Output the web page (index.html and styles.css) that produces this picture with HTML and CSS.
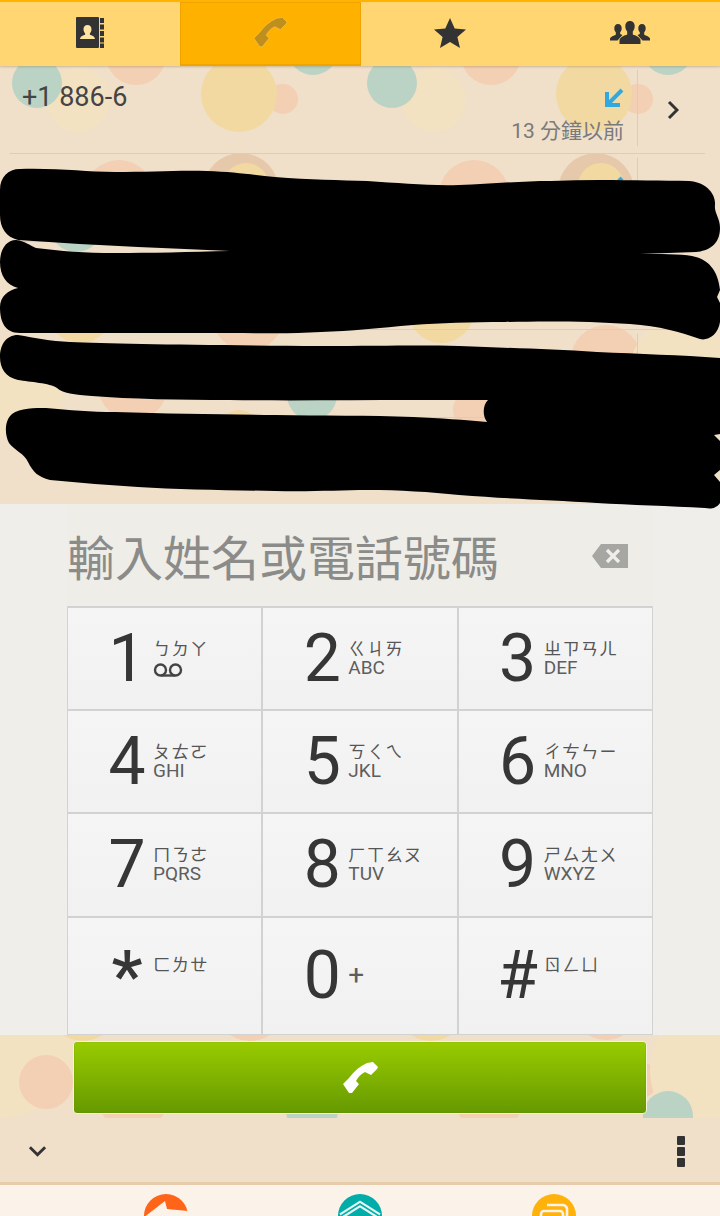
FILE: index.html
```html
<!DOCTYPE html>
<html lang="zh-Hant">
<head>
    <meta charset="UTF-8">
    <meta name="viewport" content="width=device-width, initial-scale=1.0">
    <title>Phone</title>
    <link rel="stylesheet" href="styles.css">
</head>
<body>
<div class="screen">
    <!-- wallpaper dots behind the call log and the call button -->
    <svg class="dots" viewBox="0 66 720 1052" aria-hidden="true">
        <g class="peach">
            <circle cx="136" cy="55" r="30"/><circle cx="491" cy="55" r="30"/>
            <circle cx="283" cy="99" r="15"/><circle cx="638" cy="99" r="15"/>
            <circle cx="119" cy="195" r="35"/><circle cx="474" cy="195" r="35"/>
            <circle cx="248" cy="315" r="36"/><circle cx="606" cy="360" r="35"/>
            <circle cx="42" cy="378" r="20"/><circle cx="133" cy="385" r="35"/>
            <circle cx="473" cy="410" r="20"/>
            <circle cx="250" cy="1005" r="36"/><circle cx="606" cy="1005" r="35"/>
            <circle cx="133" cy="1095" r="36"/><circle cx="489" cy="1095" r="36"/>
            <circle cx="640" cy="1080" r="18"/>
        </g>
        <g class="pale">
            <circle cx="15" cy="390" r="48"/><circle cx="680" cy="370" r="50"/>
            <circle cx="0" cy="1040" r="78"/><circle cx="720" cy="1070" r="70"/>
            <circle cx="78" cy="100" r="32"/><circle cx="434" cy="100" r="32"/>
        </g>
        <g class="teal">
            <circle cx="37" cy="83" r="25"/><circle cx="392" cy="83" r="25"/>
            <circle cx="313" cy="50" r="25"/><circle cx="668" cy="50" r="25"/>
            <circle cx="76" cy="226" r="26"/><circle cx="668" cy="228" r="25"/>
            <circle cx="312" cy="395" r="25"/>
            <circle cx="312" cy="1110" r="26"/><circle cx="668" cy="1116" r="25"/>
        </g>
        <g class="yellow">
            <circle cx="239" cy="94" r="38"/><circle cx="594" cy="94" r="38"/>
            <circle cx="80" cy="310" r="33"/><circle cx="441" cy="310" r="33"/>
            <circle cx="239" cy="430" r="20"/>
            <circle cx="83" cy="1005" r="36"/><circle cx="431" cy="1005" r="36"/>
        </g>
        <g class="ring">
            <circle cx="241" cy="191" r="38"/><circle cx="596" cy="191" r="38"/>
        </g>
        <g class="yellow">
            <circle cx="246" cy="186" r="23"/><circle cx="601" cy="186" r="23"/>
        </g>
        <circle cx="46" cy="1082" r="27" class="peach"/>
    </svg>

    <nav class="tabs">
        <div class="tab">
            <svg class="icon-book" viewBox="0 0 28 31">
                <rect width="23" height="31" rx="1" fill="#333"/>
                <path d="M24 1h4v5h-4zM24 7.500h4v5h-4zM24 14h4v5h-4zM24 20.500h4v5h-4zM24 26.500h4v4.500h-4z" fill="#333"/>
                <path d="M11.500 8c2.600 0 4 1.800 4 4.200 0 1.700-.7 3.200-1.600 4.100v1.500c2 .8 4.600 1.400 5.100 4.200H4c.5-2.800 3.100-3.400 5.100-4.200v-1.500c-.9-.9-1.600-2.400-1.600-4.100C7.500 9.800 8.900 8 11.500 8z" fill="#FFE3A0"/>
            </svg>
        </div>
        <div class="tab tab-active">
            <svg class="icon-phone" viewBox="10 10 38 33">
                <path d="M12 33L18 27C23 20 29 15 36 12L42 11 47 16 46 18 40 24 34 21C30 23 27 26 25 30L28 33 21 42 18 42z" fill="#BF8F1D" stroke="#F5C04A" stroke-width=".8"/>
            </svg>
        </div>
        <div class="tab">
            <svg class="icon-star" viewBox="0 0 32 30">
                <path d="M16 0l4.700 10.600 11.300 1-8.600 7.500 2.600 10.900-10-5.900-10 5.900 2.600-10.900L0 11.600l11.300-1z" fill="#333"/>
            </svg>
        </div>
        <div class="tab">
            <svg class="icon-group" viewBox="0 0 40 23">
                <path d="M8 3c2.400 0 3.700 1.800 3.700 4.200 0 1.800-.7 3.200-1.500 4.100v1.700l2.300 1-5 5.500H0v-2c.6-2 3.800-3 5.800-3.800v-2.400C5 10.400 4.300 9 4.300 7.200 4.300 4.800 5.600 3 8 3zM32 3c2.400 0 3.700 1.800 3.700 4.200 0 1.800-.7 3.200-1.500 4.100v2.400c2 .8 5.200 1.800 5.800 3.800v2h-7.500l-5-5.500 2.300-1v-1.700c-.8-.9-1.500-2.300-1.500-4.100C28.300 4.800 29.600 3 32 3z" fill="#333"/>
                <path d="M20 0c3 0 4.700 2.200 4.700 5.200 0 2.300-.9 4.200-1.900 5.300v3c2.600 1 6.800 2.400 7.700 5.300V23h-21v-4.200c.9-2.900 5.100-4.300 7.700-5.300v-3c-1-1.100-1.900-3-1.900-5.300C15.300 2.200 17 0 20 0z" fill="#333"/>
            </svg>
        </div>
    </nav>

    <section class="log">
        <div class="log-row">
            <div class="log-main"><span class="log-name">+1 886-6</span></div>
            <div class="log-meta">
                <svg class="icon-missed" viewBox="0 0 20 20"><path d="M18 2L3 17M3 4v13h13" fill="none" stroke="#2FA9E0" stroke-width="4"/></svg>
                <span class="log-time">13 分鐘以前</span>
            </div>
            <div class="log-more">
                <svg class="icon-chevron" viewBox="0 0 12 20"><path d="M2 2l8 8-8 8" fill="none" stroke="#333" stroke-width="3"/></svg>
            </div>
        </div>
        <div class="log-row">
            <div class="log-main"></div>
            <div class="log-meta">
                <svg class="icon-missed" viewBox="0 0 20 20"><path d="M18 2L3 17M3 4v13h13" fill="none" stroke="#2FA9E0" stroke-width="4"/></svg>
            </div>
            <div class="log-more"></div>
        </div>
        <div class="log-row">
            <div class="log-main"></div>
            <div class="log-meta"></div>
            <div class="log-more"></div>
        </div>
        <div class="log-row">
            <div class="log-main"></div>
            <div class="log-meta"></div>
            <div class="log-more"></div>
        </div>
    </section>

    <section class="dialer">
        <div class="entry">
            <span class="entry-hint">輸入姓名或電話號碼</span>
            <svg class="icon-back" viewBox="0 0 36 24">
                <path d="M9 0h27v24H9L0 12z" fill="#A6A6A3"/>
                <path d="M15 6l12 12M27 6L15 18" stroke="#EFEEEA" stroke-width="3.200"/>
            </svg>
        </div>
        <div class="keypad">
            <div class="key">
                <span class="digit">1</span>
                <div class="letters">
                    <span class="zhuyin">ㄅㄉㄚ</span>
                    <svg class="icon-voicemail" viewBox="0 0 30 14"><path d="M8 12.500h14" stroke="#444" stroke-width="2.400"/><circle cx="7.500" cy="7" r="5.500" fill="none" stroke="#444" stroke-width="2.400"/><circle cx="22.500" cy="7" r="5.500" fill="none" stroke="#444" stroke-width="2.400"/></svg>
                </div>
            </div>
            <div class="key">
                <span class="digit">2</span>
                <div class="letters"><span class="zhuyin">ㄍㄐㄞ</span><span class="latin">ABC</span></div>
            </div>
            <div class="key">
                <span class="digit">3</span>
                <div class="letters"><span class="zhuyin">ㄓㄗㄢㄦ</span><span class="latin">DEF</span></div>
            </div>
            <div class="key">
                <span class="digit">4</span>
                <div class="letters"><span class="zhuyin">ㄆㄊㄛ</span><span class="latin">GHI</span></div>
            </div>
            <div class="key">
                <span class="digit">5</span>
                <div class="letters"><span class="zhuyin">ㄎㄑㄟ</span><span class="latin">JKL</span></div>
            </div>
            <div class="key">
                <span class="digit">6</span>
                <div class="letters"><span class="zhuyin">ㄔㄘㄣㄧ</span><span class="latin">MNO</span></div>
            </div>
            <div class="key">
                <span class="digit">7</span>
                <div class="letters"><span class="zhuyin">ㄇㄋㄜ</span><span class="latin">PQRS</span></div>
            </div>
            <div class="key">
                <span class="digit">8</span>
                <div class="letters"><span class="zhuyin">ㄏㄒㄠㄡ</span><span class="latin">TUV</span></div>
            </div>
            <div class="key">
                <span class="digit">9</span>
                <div class="letters"><span class="zhuyin">ㄕㄙㄤㄨ</span><span class="latin">WXYZ</span></div>
            </div>
            <div class="key key-last">
                <span class="digit digit-star">*</span>
                <div class="letters"><span class="zhuyin">ㄈㄌㄝ</span></div>
            </div>
            <div class="key key-last">
                <span class="digit">0</span>
                <div class="letters"><span class="latin plus">+</span></div>
            </div>
            <div class="key key-last">
                <span class="digit">#</span>
                <div class="letters"><span class="zhuyin">ㄖㄥㄩ</span></div>
            </div>
        </div>
    </section>

    <div class="call-strip">
        <button class="call-btn" type="button">
            <svg class="icon-call" viewBox="10 10 38 33">
                <path d="M12 33L18 27C23 20 29 15 36 12L42 11 47 16 46 18 40 24 34 21C30 23 27 26 25 30L28 33 21 42 18 42z" fill="#fff"/>
            </svg>
        </button>
    </div>

    <div class="action-bar">
        <svg class="icon-down" viewBox="0 0 20 12"><path d="M2 2l8 8 8-8" fill="none" stroke="#333" stroke-width="3"/></svg>
        <div class="menu-dots"><i></i><i></i><i></i></div>
    </div>

    <div class="home-bar">
        <svg class="home-btn" viewBox="0 0 44 22">
            <circle cx="22" cy="22" r="22" fill="#FF6418"/>
            <path d="M-1 24L21 7 23 15 44 17V24z" fill="#FBF3E9"/>
        </svg>
        <svg class="home-btn" viewBox="0 0 44 22">
            <circle cx="22" cy="22" r="22" fill="#00ADA9"/>
            <path d="M3 22L22 10l19 12" fill="none" stroke="#E6F5F2" stroke-width="6"/>
            <path d="M3 22L22 10l19 12" fill="none" stroke="#00ADA9" stroke-width="1.500"/>
        </svg>
        <svg class="home-btn" viewBox="0 0 44 22">
            <circle cx="22" cy="22" r="22" fill="#FFB20A"/>
            <rect x="9" y="17" width="22" height="20" rx="3" fill="none" stroke="#FBF3E9" stroke-width="2.600"/>
            <path d="M15 11h16c2 0 4 2 4 4v10" fill="none" stroke="#FBF3E9" stroke-width="2.600"/>
        </svg>
    </div>

    <!-- hand drawn black-out over the private rows -->
    <svg class="scribble" viewBox="0 0 720 1216" aria-hidden="true">
        <path d="M20 169C60 168 85 172 115 172 150 172 180 170 207 171 235 172 255 175 275 177 310 180 340 180 367 181 400 183 430 186 459 185 490 184 520 181 551 181 600 179 650 181 689 181 705 182 716 193 715 205 714 213 720 218 720 228 720 245 708 251 696 252L640 254C660 254 680 254 692 256 708 259 718 270 720 290L717 297 720 303 720 322C718 335 708 341 700 339 680 332 660 326 630 324 590 321 540 321 505 322 470 322 440 323 413 325 380 328 350 331 321 332 290 334 260 333 230 333L20 333C5 333 0 322 0 307 0 297 8 290 18 288 6 285 0 275 0 262 0 250 6 240 16 240 26 241 30 246 36 248 60 251 85 253 115 253 150 253 190 252 230 251 200 250 170 248 138 247 100 245 60 243 18 240 6 237 0 228 0 215L0 190C0 177 8 169 20 169z"/>
        <path d="M18 335C35 338 50 341 70 342 110 344 200 345 321 346 380 346 420 345 459 346 510 348 550 349 597 352 640 354 680 355 720 358L720 434 714 435 720 441 720 470 714 475 720 482 720 503C716 509 710 509 705 508 670 506 630 505 597 503 550 500 510 499 459 495 430 492 400 490 367 490 340 490 310 492 275 491 230 490 180 490 138 487 110 485 80 483 50 480 38 477 33 472 28 462 25 454 14 450 9 443 4 433 5 420 12 414 20 408 35 408 46 408 70 410 90 412 115 412 170 414 220 414 275 415 320 416 370 415 413 417 440 418 465 420 487 422 482 415 483 405 488 400L413 400C350 400 290 401 230 400 180 400 130 399 92 396 75 395 62 393 57 388 50 383 30 382 18 380 5 377 0 368 0 357 0 345 6 335 18 335z"/>
    </svg>
</div>
</body>
</html>
```

FILE: styles.css
```css
* {
    box-sizing: border-box;
}
body {
    margin: 0;
    font-family: Roboto, "Noto Sans CJK TC", sans-serif;
    color: #333;
}
svg {
    display: block;
    flex: none;
}
.screen {
    position: relative;
    display: flex;
    flex-direction: column;
    width: 720px;
    height: 1216px;
    overflow: hidden;
    background-color: #F0DFC9;
}
.dots {
    position: absolute;
    top: 66px;
    left: 0;
    width: 720px;
    height: 1052px;
}
.peach { fill: #F3CFB3; }
.teal { fill: #BBD3C4; }
.yellow { fill: #F2D9A2; }
.pale { fill: #F3E2C2; }
.ring { fill: #E6C9AA; }
.scribble {
    position: absolute;
    top: 0;
    left: 0;
    width: 720px;
    height: 1216px;
    fill: #000;
}

/* tabs */
.tabs {
    position: relative;
    display: flex;
    height: 66px;
    background-color: #FFD672;
    border-top: 2px solid #FFB300;
    box-shadow: 0 1px 2px rgba(120, 90, 40, 0.3);
}
.tab {
    flex: 1;
    display: flex;
    align-items: center;
    justify-content: center;
}
.tab-active {
    background-color: #FFB100;
    border: 1px solid #EFA400;
    border-bottom-width: 2px;
}
.icon-book { width: 28px; height: 31px; margin-top: -3px; }
.icon-phone { width: 36px; height: 32px; margin-top: -3px; }
.icon-star { width: 32px; height: 30px; margin: -3px 2px 0 0; }
.icon-group { width: 40px; height: 23px; margin-top: -3px; }

/* call log */
.log {
    position: relative;
    height: 438px;
}
.log-row {
    display: flex;
    height: 88px;
    margin: 0 15px 0 10px;
    border-bottom: 1px solid #DBCDB8;
}
.log-main {
    flex: 1;
    padding: 15px 0 0 12px;
}
.log-name {
    font-size: 27px;
    line-height: 32px;
    color: #444;
}
.log-meta {
    display: flex;
    flex-direction: column;
    align-items: flex-end;
    width: 130px;
    padding: 22px 13px 0 0;
}
.icon-missed { width: 20px; height: 20px; }
.log-time {
    margin-top: 10px;
    font-size: 21px;
    line-height: 26px;
    color: #7A7A7A;
}
.log-more {
    width: 68px;
    margin: 4px 0 7px;
    padding: 30px 0 0 29px;
    border-left: 1px solid #DBCDB8;
}
.icon-chevron { width: 12px; height: 20px; }

/* dialer */
.dialer {
    position: relative;
    height: 531px;
    padding: 0 67px;
    background-color: #EFEEEA;
}
.entry {
    display: flex;
    align-items: center;
    justify-content: space-between;
    height: 102px;
    padding: 0 25px 0 0;
    background-color: #EEEDE8;
}
.entry-hint {
    font-family: "Noto Sans CJK TC", sans-serif;
    font-size: 48px;
    line-height: 60px;
    color: #8B8B89;
}
.icon-back { width: 36px; height: 24px; margin-top: 2px; }
.keypad {
    display: grid;
    grid-template-columns: repeat(3, 1fr);
    grid-template-rows: 101px 101px 102px 116px;
    gap: 2px;
    height: 429px;
    padding: 2px 1px 1px;
    background-color: #D2D2D2;
}
.key {
    display: flex;
    align-items: flex-start;
    padding: 18px 0 0 38px;
    background: linear-gradient(#F5F5F5, #F1F1F1);
}
.digit {
    width: 42px;
    font-size: 66px;
    line-height: 66px;
    text-align: center;
    color: #363636;
}
.digit-star {
    font-size: 70px;
    font-weight: 500;
}
.letters {
    display: flex;
    flex-direction: column;
    margin: 11px 0 0 5px;
}
.key-last {
    padding-top: 25px;
}
.key-last .letters {
    margin-top: 10px;
}
.zhuyin {
    font-family: "Noto Sans CJK TC", sans-serif;
    font-size: 17.500px;
    line-height: 21px;
    letter-spacing: 1px;
    color: #555;
}
.latin {
    font-size: 19px;
    line-height: 20px;
    color: #5E5E5E;
}
.plus {
    margin-top: 12px;
    font-size: 28px;
}
.icon-voicemail { width: 30px; height: 14px; margin-top: 5px; }

/* call button */
.call-strip {
    position: relative;
    flex: 1;
    padding: 6px 73px 4px;
}
.call-btn {
    display: flex;
    align-items: center;
    justify-content: center;
    width: 100%;
    height: 73px;
    padding: 0;
    border: 1px solid #F6F3D8;
    border-radius: 4px;
    background: linear-gradient(#99CC00, #669900);
    box-shadow: inset 0 0 1px #4F7A00;
}
.icon-call { width: 38px; height: 33px; }

/* bottom bars */
.action-bar {
    position: relative;
    display: flex;
    align-items: center;
    justify-content: space-between;
    height: 67px;
    padding: 0 35px 0 28px;
    background-color: #F0DFC9;
    border-bottom: 3px solid #E6CCAA;
}
.icon-down { width: 19px; height: 12px; margin-top: 2px; }
.menu-dots {
    display: flex;
    flex-direction: column;
    gap: 2px;
    margin-top: 2px;
}
.menu-dots i {
    width: 8px;
    height: 9px;
    border-radius: 1px;
    background-color: #333;
}
.home-bar {
    position: relative;
    display: grid;
    grid-template-columns: repeat(3, 194px);
    justify-content: center;
    justify-items: center;
    height: 31px;
    padding-top: 9px;
    background-color: #FBF3E9;
}
.home-btn { width: 44px; height: 22px; }
```
